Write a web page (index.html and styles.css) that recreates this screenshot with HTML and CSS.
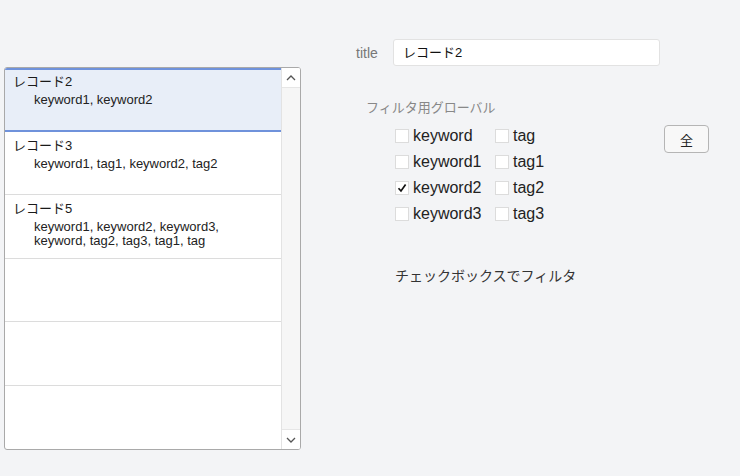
FILE: index.html
```html
<!DOCTYPE html>
<html lang="ja">
<head>
<meta charset="utf-8">
<link rel="stylesheet" href="styles.css">
</head>
<body>
<div class="page">
  <div class="list">
    <div class="rows">
      <div class="row selected">
        <div class="rtitle">レコード2</div>
        <div class="rtags">keyword1, keyword2</div>
      </div>
      <div class="row">
        <div class="rtitle">レコード3</div>
        <div class="rtags">keyword1, tag1, keyword2, tag2</div>
      </div>
      <div class="row">
        <div class="rtitle">レコード5</div>
        <div class="rtags">keyword1, keyword2, keyword3,<br>keyword, tag2, tag3, tag1, tag</div>
      </div>
      <div class="row"></div>
      <div class="row"></div>
      <div class="row last"></div>
    </div>
    <div class="scrollbar">
      <div class="sbtn up"><svg width="10" height="6" viewBox="0 0 10 6"><path d="M1 5 L5 1 L9 5" fill="none" stroke="#555" stroke-width="1.3"/></svg></div>
      <div class="sbtn down"><svg width="10" height="6" viewBox="0 0 10 6"><path d="M1 1 L5 5 L9 1" fill="none" stroke="#555" stroke-width="1.3"/></svg></div>
    </div>
  </div>
  <div class="form">
    <div class="field">
      <span class="label">title</span>
      <div class="input">レコード2</div>
    </div>
    <div class="heading">フィルタ用グローバル</div>
    <div class="filters">
      <div class="grid">
        <label class="cb"><span class="box"></span>keyword</label>
        <label class="cb"><span class="box"></span>tag</label>
        <label class="cb"><span class="box"></span>keyword1</label>
        <label class="cb"><span class="box"></span>tag1</label>
        <label class="cb"><span class="box checked"><svg width="10" height="10" viewBox="0 0 10 10"><path d="M1.5 5.2 L4 8 L8.6 1.6" fill="none" stroke="#111" stroke-width="1.7"/></svg></span>keyword2</label>
        <label class="cb"><span class="box"></span>tag2</label>
        <label class="cb"><span class="box"></span>keyword3</label>
        <label class="cb"><span class="box"></span>tag3</label>
      </div>
      <button class="all">全</button>
    </div>
    <div class="note">チェックボックスでフィルタ</div>
  </div>
</div>
</body>
</html>
```
FILE: styles.css
```css
html, body {
  margin: 0;
  padding: 0;
  background: #f3f4f6;
  font-family: "Liberation Sans", "Noto Sans CJK JP", sans-serif;
  color: #222;
}
.page {
  display: flex;
  padding-left: 4px;
}
.list {
  margin-top: 67px;
  width: 295px;
  height: 381px;
  border: 1px solid #a9a9a9;
  border-radius: 3px;
  background: #fff;
  display: flex;
  overflow: hidden;
}
.rows {
  flex: 1;
  display: flex;
  flex-direction: column;
}
.row {
  box-sizing: border-box;
  height: 63.6px;
  flex: none;
  border-bottom: 1.5px solid #dcdcdc;
  padding: 5px 0 0 8px;
  font-size: 13px;
}
.row.last {
  border-bottom: none;
  flex: 1;
}
.row.selected {
  background: #e8eef8;
  border-top: 2px solid #6f92db;
  border-bottom: 2px solid #6f92db;
  padding-top: 3px;
}
.rtitle {
  line-height: 18px;
  color: #1a1a1a;
}
.rtags {
  padding-left: 21px;
  line-height: 14px;
  margin-top: 2px;
  color: #222;
}
.scrollbar {
  width: 18px;
  border-left: 1px solid #e3e3e3;
  background: #f6f6f6;
  display: flex;
  flex-direction: column;
  justify-content: space-between;
}
.sbtn {
  height: 19px;
  background: #fff;
  display: flex;
  align-items: center;
  justify-content: center;
}
.sbtn.up {
  border-bottom: 1px solid #e6e6e6;
}
.sbtn.down {
  border-top: 1px solid #e6e6e6;
}
.form {
  margin-left: 55px;
  padding-top: 39px;
  display: flex;
  flex-direction: column;
}
.field {
  display: flex;
  align-items: center;
}
.label {
  width: 37px;
  font-size: 14px;
  color: #777;
}
.input {
  box-sizing: border-box;
  width: 267px;
  height: 27px;
  border: 1px solid #e2e2e2;
  border-radius: 3px;
  background: #fff;
  padding: 2px 9px 0;
  font-size: 13px;
  line-height: 22px;
  color: #111;
}
.heading {
  margin-top: 33px;
  margin-left: 10px;
  font-size: 13px;
  color: #888;
  line-height: 18px;
}
.filters {
  display: flex;
  align-items: flex-start;
  margin-top: 6px;
  margin-left: 39px;
}
.grid {
  display: grid;
  grid-template-columns: 100px 80px;
  grid-auto-rows: 26px;
}
.cb {
  display: flex;
  align-items: center;
  font-size: 16px;
  color: #222;
}
.box {
  box-sizing: border-box;
  width: 14px;
  height: 14px;
  border: 1px solid #dcdcdc;
  background: #fff;
  margin-right: 4px;
  display: flex;
  align-items: center;
  justify-content: center;
}
.all {
  margin-left: 89px;
  margin-top: 2px;
  width: 45px;
  height: 28px;
  border: 1px solid #b5b5b5;
  border-radius: 4px;
  background: #f8f8f8;
  font-family: "Noto Sans CJK JP", sans-serif;
  font-size: 13px;
  color: #222;
  padding: 0;
}
.note {
  margin-top: 38px;
  margin-left: 39px;
  font-size: 14px;
  color: #333;
}
```
